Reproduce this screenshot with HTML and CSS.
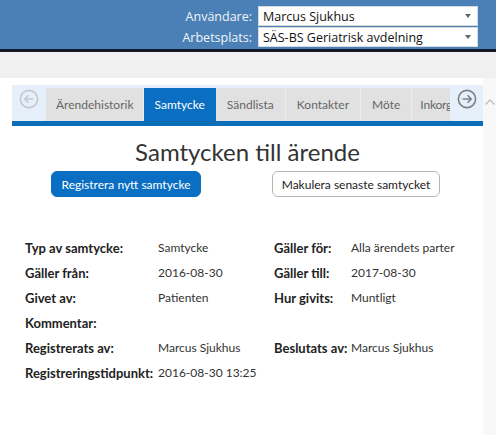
FILE: index.html
```html
<!DOCTYPE html>
<html lang="sv">
<head>
<meta charset="utf-8">
<link rel="stylesheet" href="styles.css">
</head>
<body>
<header class="topbar">
  <div class="fields">
    <div class="field">
      <span class="flabel">Användare:</span>
      <div class="select"><span>Marcus Sjukhus</span><i class="caret"></i></div>
    </div>
    <div class="field">
      <span class="flabel">Arbetsplats:</span>
      <div class="select"><span>SÄS-BS Geriatrisk avdelning</span><i class="caret"></i></div>
    </div>
  </div>
</header>
<div class="strip"></div>
<div class="main">
  <div class="content">
    <nav class="tabbar">
      <div class="nav nav-left">
        <svg width="20" height="20" viewBox="0 0 20 20"><circle cx="10" cy="10" r="8.6" fill="none" stroke="#c4c8cc" stroke-width="1.6"/><path d="M14.5 10H6M9.5 6.3L5.8 10l3.7 3.7" fill="none" stroke="#c4c8cc" stroke-width="1.6"/></svg>
      </div>
      <div class="tabs">
        <span class="tab first">Ärendehistorik</span>
        <span class="tab active">Samtycke</span>
        <span class="tab">Sändlista</span>
        <span class="tab">Kontakter</span>
        <span class="tab">Möte</span>
        <span class="tab last">Inkorg</span>
      </div>
      <div class="nav nav-right">
        <svg width="20" height="20" viewBox="0 0 20 20"><circle cx="10" cy="10" r="8.6" fill="none" stroke="#7d8185" stroke-width="1.6"/><path d="M5.5 10H14M10.5 6.3L14.2 10l-3.7 3.7" fill="none" stroke="#7d8185" stroke-width="1.6"/></svg>
      </div>
    </nav>
    <h1 class="title">Samtycken till ärende</h1>
    <div class="actions">
      <button class="btn primary">Registrera nytt samtycke</button>
      <button class="btn secondary">Makulera senaste samtycket</button>
    </div>
    <div class="details">
      <div class="row"><span class="k">Typ av samtycke:</span><span class="v">Samtycke</span><span class="k k2">Gäller för:</span><span class="v">Alla ärendets parter</span></div>
      <div class="row"><span class="k">Gäller från:</span><span class="v">2016-08-30</span><span class="k k2">Gäller till:</span><span class="v">2017-08-30</span></div>
      <div class="row"><span class="k">Givet av:</span><span class="v">Patienten</span><span class="k k2">Hur givits:</span><span class="v">Muntligt</span></div>
      <div class="row"><span class="k">Kommentar:</span><span class="v"></span><span class="k k2"></span><span class="v"></span></div>
      <div class="row"><span class="k">Registrerats av:</span><span class="v">Marcus Sjukhus</span><span class="k k2">Beslutats av:</span><span class="v">Marcus Sjukhus</span></div>
      <div class="row"><span class="k">Registreringstidpunkt:</span><span class="v">2016-08-30 13:25</span><span class="k k2"></span><span class="v"></span></div>
    </div>
  </div>
  <div class="scroll">
    <svg width="12" height="8" viewBox="0 0 12 8"><path d="M1.5 6.5L6 2l4.5 4.5" fill="none" stroke="#c2c2c2" stroke-width="1.5"/></svg>
  </div>
</div>
</body>
</html>
```
FILE: styles.css
```css
* { box-sizing: border-box; }
html, body { margin: 0; padding: 0; }
body {
  width: 496px;
  height: 435px;
  overflow: hidden;
  font-family: "Lato", "Open Sans", sans-serif;
  color: #222;
  background: #fff;
  display: flex;
  flex-direction: column;
}
.topbar {
  height: 52px;
  background: #4b80b6;
  border-bottom: 3px solid #14192a;
  display: flex;
  justify-content: flex-end;
  padding: 6px 18px 0 0;
  font-family: "Open Sans", sans-serif;
}
.fields { display: flex; flex-direction: column; gap: 1px; }
.field { display: flex; align-items: center; gap: 6px; }
.flabel {
  width: 90px;
  text-align: right;
  color: #f0f4f8;
  font-size: 12.5px;
}
.select {
  width: 220px;
  height: 20px;
  background: #fff;
  border: 1px solid #d6dbe0;
  display: flex;
  align-items: center;
  justify-content: space-between;
  padding: 0 6px 0 4px;
  font-size: 12.5px;
  color: #111;
}
.caret {
  width: 0; height: 0;
  border-left: 3.5px solid transparent;
  border-right: 3.5px solid transparent;
  border-top: 4px solid #666;
}
.strip { height: 26px; background: #f0f0f0; }
.main { flex: 1; display: flex; min-width: 0; }
.content { flex: 1; min-width: 0; padding: 7px 0 0 12px; }
.scroll {
  width: 13px;
  flex: none;
  background: #f8f8f8;
  display: flex;
  justify-content: center;
  padding-top: 20px;
}
.tabbar {
  height: 41px;
  display: flex;
  background: #e6f0fb;
  border-bottom: 5px solid #0b6cb8;
}
.nav { width: 34px; flex: none; display: flex; justify-content: center; padding-top: 4px; }
.nav-right { width: 33px; }
.tabs { flex: 1; min-width: 0; display: flex; align-items: flex-end; overflow: hidden; }
.tab {
  height: 33px;
  background: #e1e1e1;
  color: #666;
  font-size: 12px;
  display: flex;
  align-items: center;
  padding: 0 11px;
  border-right: 1px solid #ececec;
  white-space: nowrap;
  flex: none;
}
.tab.first { padding: 0 9px 0 10px; }
.tab.active { background: #0a6fc2; color: #fff; border-right: none; }
.tab.last { padding: 0 0 0 8px; border-right: none; flex: 1 1 auto; min-width: 0; letter-spacing: -0.2px; }
.title {
  margin: 11px 0 0 0;
  font-weight: normal;
  font-size: 24px;
  text-align: center;
  color: #333;
  line-height: 30px;
}
.actions {
  display: flex;
  gap: 71px;
  padding-left: 39px;
  margin-top: 4px;
}
.btn {
  font-family: inherit;
  font-size: 12px;
  height: 26px;
  border-radius: 6px;
  padding: 0;
  white-space: nowrap;
}
.primary { width: 150px; background: #0a6fc2; color: #fff; border: 1px solid #0a6fc2; }
.secondary { width: 168px; background: #fff; color: #222; border: 1px solid #b5b5b5; }
.details { margin-top: 38px; padding-left: 13px; }
.row {
  display: grid;
  grid-template-columns: 133px 116px 77px 1fr;
  height: 25px;
  align-items: center;
  font-size: 12px;
}
.k { font-weight: bold; color: #222; white-space: nowrap; font-size: 13px; }
.v { color: #333; white-space: nowrap; }
```
